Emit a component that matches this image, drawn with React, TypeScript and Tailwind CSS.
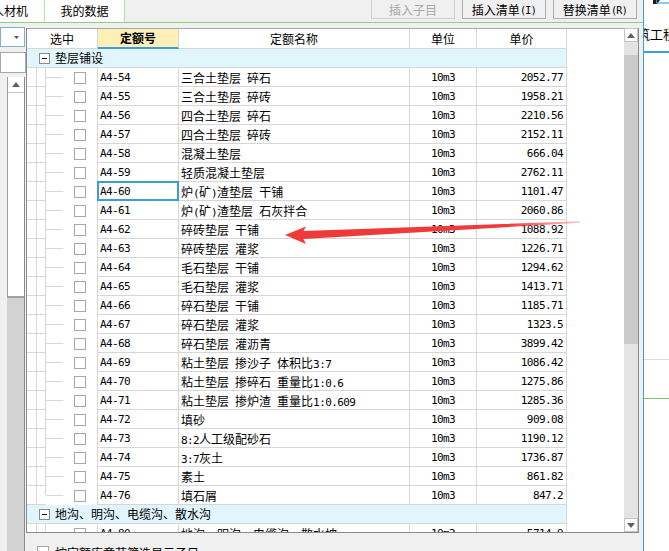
import React from "react";

const mono = "font-['DejaVu_Sans_Mono',monospace] text-[11px] tracking-[-0.6px]";

type Row = [string, string, string];

const rows: Row[] = [
  ["A4-54", "三合土垫层 碎石", "2052.77"],
  ["A4-55", "三合土垫层 碎砖", "1958.21"],
  ["A4-56", "四合土垫层 碎石", "2210.56"],
  ["A4-57", "四合土垫层 碎砖", "2152.11"],
  ["A4-58", "混凝土垫层", "666.04"],
  ["A4-59", "轻质混凝土垫层", "2762.11"],
  ["A4-60", "炉(矿)渣垫层 干铺", "1101.47"],
  ["A4-61", "炉(矿)渣垫层 石灰拌合", "2060.86"],
  ["A4-62", "碎砖垫层 干铺", "1088.92"],
  ["A4-63", "碎砖垫层 灌浆", "1226.71"],
  ["A4-64", "毛石垫层 干铺", "1294.62"],
  ["A4-65", "毛石垫层 灌浆", "1413.71"],
  ["A4-66", "碎石垫层 干铺", "1185.71"],
  ["A4-67", "碎石垫层 灌浆", "1323.5"],
  ["A4-68", "碎石垫层 灌沥青", "3899.42"],
  ["A4-69", "粘土垫层 掺沙子 体积比3:7", "1086.42"],
  ["A4-70", "粘土垫层 掺碎石 重量比1:0.6", "1275.86"],
  ["A4-71", "粘土垫层 掺炉渣 重量比1:0.609", "1285.36"],
  ["A4-72", "填砂", "909.08"],
  ["A4-73", "8:2人工级配砂石", "1190.12"],
  ["A4-74", "3:7灰土", "1736.87"],
  ["A4-75", "素土", "861.82"],
  ["A4-76", "填石屑", "847.2"],
];

// ascii runs get the narrow mono font, CJK stays 12px
const Name = ({ text }: { text: string }) => (
  <>
    {text.split(/([\x20-\x7e]+)/).map((p, i) =>
      /[\x20-\x7e]/.test(p) ? (
        <span key={i} className={mono + " whitespace-pre"}>
          {p}
        </span>
      ) : (
        <React.Fragment key={i}>{p}</React.Fragment>
      )
    )}
  </>
);

const ChildRow = ({ r, last, selected }: { r: Row; last?: boolean; selected?: boolean }) => (
  <div className="flex h-[19px] shrink-0">
    <div className="flex w-[71px] border-r border-[#d6d6d6]">
      <div className="w-[10px] border-r border-b border-[#d6d6d6]" />
      {last ? (
        <div className="flex w-[9px] flex-col border-b border-[#d6d6d6]">
          <div className="h-[9px] border-r border-[#d6d6d6]" />
        </div>
      ) : (
        <div className="w-[9px] border-r border-b border-[#d6d6d6]" />
      )}
      <div className="flex flex-1 items-center">
        <div className="h-px w-[17px] bg-[#d6d6d6]" />
        <div className="ml-[11px] h-[12px] w-[12px] border border-[#a6a6a6] bg-white" />
      </div>
    </div>
    <div className={"relative w-[81px] border-r border-b border-[#d6d6d6] pl-[2px] pt-[2px] leading-[16px] " + mono}>
      {r[0]}
      {selected ? <div className="absolute -top-[1px] -right-[1px] -bottom-[1px] -left-[1px] border-2 border-[#3aa0d4]" /> : null}
    </div>
    <div className="w-[231px] overflow-hidden whitespace-nowrap border-r border-b border-[#d6d6d6] pl-[2px] pt-[2px] leading-[16px]">
      <Name text={r[1]} />
    </div>
    <div className={"w-[67px] border-r border-b border-[#d6d6d6] pt-[2px] text-center leading-[16px] " + mono}>10m3</div>
    <div className={"w-[90px] border-r border-b border-[#d6d6d6] pr-[3px] pt-[2px] text-right leading-[16px] " + mono}>
      {r[2]}
    </div>
  </div>
);

const GroupRow = ({ title }: { title: string }) => (
  <div className="flex h-[19px] w-[540px] shrink-0 items-center border-r border-b border-[#d6d6d6] bg-[#e1f5fc] pl-[12px]">
    <div className="flex h-[11px] w-[11px] items-center justify-center border border-[#8a8a8a] bg-white">
      <div className="h-px w-[5px] bg-black" />
    </div>
    <span className="ml-[5px] leading-[18px]">{title}</span>
  </div>
);

const Tri = ({ down }: { down?: boolean }) => (
  <svg width="8" height="5" viewBox="0 0 8 5">
    <polygon points={down ? "0,0 8,0 4,5" : "0,5 8,5 4,0"} fill="#606060" />
  </svg>
);

export default function App() {
  return (
    <div className="relative flex h-[551px] w-[669px] overflow-hidden bg-[#f0f0f0] font-['Noto_Sans_CJK_SC',sans-serif] text-[12px] text-black">
      <div className="flex w-[643px] flex-col">
        {/* top tabs + buttons */}
        <div className="flex h-[23px] shrink-0 border-b border-[#8fd07f]">
          <div className="flex h-full w-[45px] justify-end overflow-hidden border-r border-[#b5e2a9] bg-white pr-[16px] leading-[22px]">
            <span className="shrink-0 whitespace-nowrap">人材机</span>
          </div>
          <div className="h-full w-[80px] border-r border-[#b5e2a9] bg-white text-center leading-[22px]">我的数据</div>
          <div className="-mt-[3px] ml-[246px] flex h-[22px] w-[84px] items-center justify-center self-start border border-[#cfcfcf] bg-[#f0f0f0] pt-[4px] text-[#a8a8a8]">
            插入子目
          </div>
          <div className="-mt-[3px] ml-[7px] flex h-[22px] w-[84px] items-center justify-center self-start border border-[#adadad] bg-[#f0f0f0] pt-[4px]">
            插入清单<span className="font-['DejaVu_Sans_Mono',monospace] text-[10px] tracking-[-0.6px]">(I)</span>
          </div>
          <div className="-mt-[3px] ml-[7px] flex h-[22px] w-[84px] items-center justify-center self-start border border-[#adadad] bg-[#f0f0f0] pt-[4px]">
            替换清单<span className="font-['DejaVu_Sans_Mono',monospace] text-[10px] tracking-[-0.6px]">(R)</span>
          </div>
        </div>

        <div className="flex min-h-0 flex-1">
          {/* left narrow panel */}
          <div className="flex w-[26px] flex-col">
            <div className="mt-[4px] flex h-[20px] w-[25px] items-center justify-end border border-[#7db3c9] bg-white pr-[5px]">
              <svg width="5" height="3" viewBox="0 0 5 3">
                <polygon points="0,0 5,0 2.5,3" fill="#555" />
              </svg>
            </div>
            <div className="mt-[5px] h-[21px] w-[26px] border border-[#a9a9a9] bg-white" />
            <div className="mt-[4px] flex flex-1 pl-[7px] pr-[1px]">
              <div className="flex flex-1 flex-col border-r border-[#8a8a8a]">
                <div className="flex h-[221px] flex-col border-l border-b-2 border-[#a0a0a0] bg-white">
                  <div className="flex h-[16px] items-center justify-center border-b border-[#c8c8c8]">
                    <Tri />
                  </div>
                </div>
                <div className="flex-1 bg-[#d2d2d2]" />
              </div>
            </div>
          </div>

          <div className="flex flex-col">
            {/* grid */}
            <div className="mt-[5px] flex h-[505px] w-[613px] border-x border-b border-[#8a8a8a] bg-white">
              <div className="flex min-w-0 flex-1 flex-col overflow-hidden border-t border-[#a6a6a6]">
                <div className="flex h-[20px] shrink-0">
                  <div className="w-[71px] border-r border-b border-[#d6d6d6] text-center leading-[19px]">选中</div>
                  <div className="w-[81px] border-r border-b-2 border-[#d6d6d6] border-b-[#3aa0d4] bg-[#fdefb6] text-center font-bold leading-[18px]">
                    定额号
                  </div>
                  <div className="w-[231px] border-r border-b border-[#d6d6d6] text-center leading-[19px]">定额名称</div>
                  <div className="w-[67px] border-r border-b border-[#d6d6d6] text-center leading-[19px]">单位</div>
                  <div className="w-[90px] border-r border-b border-[#d6d6d6] text-center leading-[19px]">单价</div>
                </div>
                <GroupRow title="垫层铺设" />
                {rows.map((r, i) => (
                  <ChildRow key={r[0]} r={r} last={i === rows.length - 1} selected={r[0] === "A4-60"} />
                ))}
                <GroupRow title="地沟、明沟、电缆沟、散水沟" />
                <ChildRow r={["A4-80", "地沟、明沟、电缆沟、散水坡", "5714.9"]} />
              </div>
              {/* scrollbar */}
              <div className="flex w-[14px] flex-col bg-[#e4e4e4]">
                <div className="flex h-[14px] items-center justify-center border border-[#c4c4c4] bg-white">
                  <Tri />
                </div>
                <div className="mt-[13px] h-[289px] bg-[#cbcbcb]" />
                <div className="flex-1" />
                <div className="flex h-[14px] items-center justify-center border border-[#c4c4c4] bg-white">
                  <Tri down />
                </div>
              </div>
            </div>
            {/* bottom option, mostly cut off */}
            <div className="flex flex-1 items-start gap-[6px] pl-[11px] pt-[13px]">
              <div className="h-[12px] w-[12px] border border-[#a6a6a6] bg-white" />
              <span className="-mt-[2px] whitespace-nowrap">按定额库章节筛选显示子目</span>
            </div>
          </div>
        </div>
      </div>

      {/* right side panel, clipped */}
      <div className="flex w-[26px] flex-col overflow-hidden border-l border-[#3a9fd8] bg-white">
        <svg width="25" height="24" viewBox="0 0 25 24">
          <polygon points="9,0 16,0 13,4 9,4" fill="#1a1a1a" />
          <rect x="12.5" y="-4" width="14" height="7" fill="none" stroke="#2b90d8" />
        </svg>
        <div className="-ml-[7px] h-[20px] whitespace-nowrap text-[13px] leading-[20px]">筑工程</div>
        <div className="mt-[7px] h-[2px] bg-[#3a9fd8]" />
        <div className="mt-[306px] h-px bg-[#dcdcdc]" />
        <div className="mt-[38px] h-px bg-[#7ac46a]" />
      </div>

      {/* red annotation arrow */}
      <svg className="pointer-events-none absolute left-0 top-0" width="669" height="551" viewBox="0 0 669 551">
        <defs>
          <linearGradient id="fade" x1="285" y1="0" x2="582" y2="0" gradientUnits="userSpaceOnUse">
            <stop offset="0" stopColor="#f03a3a" />
            <stop offset="0.75" stopColor="#f03a3a" />
            <stop offset="1" stopColor="#f03a3a" stopOpacity="0.25" />
          </linearGradient>
        </defs>
        <polygon
          points="285,235 306,226.5 303.5,231 580,221.3 580,222.8 303.5,239 306,244"
          fill="url(#fade)"
        />
      </svg>
    </div>
  );
}
